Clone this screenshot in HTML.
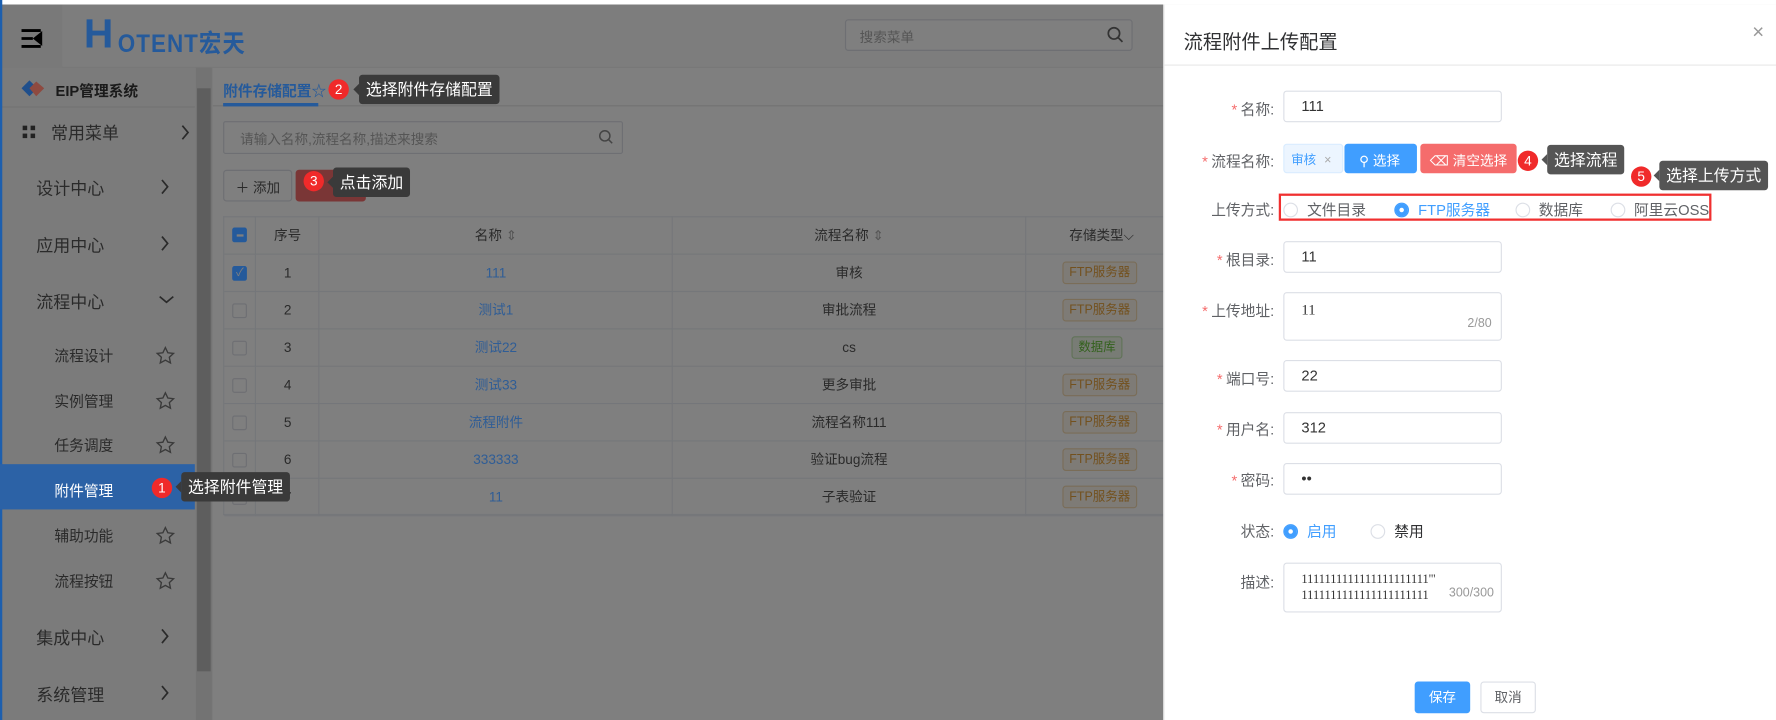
<!DOCTYPE html>
<html><head><meta charset="utf-8"><style>
*{box-sizing:border-box;margin:0;padding:0}
html,body{width:1776px;height:720px;overflow:hidden;background:#7f7f7f}
body{font-family:"Liberation Sans","Noto Sans CJK SC",sans-serif;color:#303133}
#w{position:absolute;left:0;top:0;width:1568px;height:636px;transform:scale(1.13265,1.13208);transform-origin:0 0;overflow:hidden;background:#7f7f7f}
.a{position:absolute;white-space:nowrap}
.side{font-size:15px;color:#2a2a2a}
.tbl td{border-bottom:1px solid #75777a;border-right:1px solid #75777a;text-align:center;font-size:12px;height:33px;white-space:nowrap}
.lnk{color:#2f5d96;font-size:14px}
.tag{display:inline-block;border:1px solid #7a6d58;background:#7e7b76;color:#73511e;font-size:11px;padding:0 5px;line-height:18px;border-radius:3px}
.cb{display:inline-block;width:13px;height:13px;border:1px solid #6e6f73;border-radius:2px;background:#7f7f7f;vertical-align:middle}
.badge{position:absolute;width:18px;height:18px;border-radius:50%;background:#f02a2a;color:#fff;font-size:12px;text-align:center;line-height:18px}
.tip{position:absolute;background:#3a3a3a;color:#fff;font-size:14px;padding:0 6px;line-height:26px;border-radius:3px;white-space:nowrap}
.tip:before{content:"";position:absolute;left:-5px;top:8px;border:5px solid transparent;border-left:0;border-right-color:inherit}
.lab{position:absolute;right:443px;font-size:13px;color:#606266;text-align:right;white-space:nowrap}
.lab i{color:#f56c6c;font-style:normal;margin-right:3px}
.inp{position:absolute;left:1133px;width:193px;height:28px;border:1px solid #dcdfe6;border-radius:3px;font-size:13px;color:#333;padding-left:15px;line-height:26px}
.rd{display:inline-block;width:13px;height:13px;border:1px solid #dcdfe6;border-radius:50%;vertical-align:-2px;margin-right:8px;background:#fff}
.rd.on{border-color:#409eff;background:#409eff;box-shadow:inset 0 0 0 3.5px #409eff,inset 0 0 0 10px #fff}
.sub{font-size:13px;color:#2a2a2a}
</style></head><body><div id="w">
<div class="a" style="left:0;top:0;width:1568px;height:4px;background:#fff"></div>
<div class="a" style="left:0;top:4px;width:1027px;height:56px;background:#7d7d7d;border-bottom:1px solid #777"></div>
<div class="a" style="left:0;top:4px;width:55px;height:56px;background:#797979"></div>
<svg class="a" style="left:17px;top:24px" width="22" height="20"><path d="M2 3h17M2 10h10M2 17h17M19 6l-5 4 5 4z" stroke="#000" stroke-width="2.5" fill="#000"/></svg>
<div class="a" style="left:74px;top:9px;font-size:36px;font-weight:bold;color:#255a9b">H</div>
<div class="a" style="left:104px;top:21px;font-size:22px;color:#255a9b;letter-spacing:1px;font-weight:bold;transform:scaleX(.9);transform-origin:0 0">OTENT宏天</div>
<div class="a" style="left:746px;top:17px;width:254px;height:28px;border:1px solid #6e6f73;border-radius:3px;background:#7f7f7f;font-size:12px;color:#555;padding:6px 12px">搜索菜单</div>
<svg class="a" style="left:977px;top:23px" width="15" height="15"><circle cx="6.5" cy="6.5" r="5" stroke="#333" stroke-width="1.5" fill="none"/><path d="M10 10l4 4" stroke="#333" stroke-width="1.5"/></svg>
<div class="a" style="left:0;top:60px;width:188px;height:576px;background:#7b7b7b"></div>
<div class="a" style="left:173px;top:60px;width:14px;height:576px;background:#737373"></div>
<div class="a" style="left:174px;top:78px;width:12px;height:515px;background:#5e5e5e"></div>
<svg class="a" style="left:18px;top:70px" width="22" height="16"><path d="M1 8l7-7 7 7-7 7z" fill="#1f4f8c"/><path d="M8 8l6-6 7 6-7 7z" fill="#8e4a40"/></svg>
<div class="a" style="left:49px;top:70px;font-size:13px;font-weight:bold;color:#1a1a1a">EIP管理系统</div>
<div class="a" style="left:0;top:94px;width:172px;height:1px;background:#727272"></div>
<div class="a" style="left:20px;top:111px;width:11px;height:11px;background:linear-gradient(#222,#222) 0 0/4px 4px no-repeat,linear-gradient(#222,#222) 7px 0/4px 4px no-repeat,linear-gradient(#222,#222) 0 7px/4px 4px no-repeat,linear-gradient(#222,#222) 7px 7px/4px 4px no-repeat"></div>
<div class="a side" style="left:45px;top:107px">常用菜单</div>
<div class="a side" style="left:32px;top:156px">设计中心</div>
<div class="a side" style="left:32px;top:206px">应用中心</div>
<div class="a side" style="left:32px;top:256px">流程中心</div>
<div class="a side" style="left:32px;top:553px">集成中心</div>
<div class="a side" style="left:32px;top:603px">系统管理</div>
<svg class="a" style="left:0;top:0" width="172" height="636"><g stroke="#2a2a2a" stroke-width="1.5" fill="none"><path d="M161 111l5 6-5 6M143 159l5 6-5 6M143 209l5 6-5 6M141 262l6 5 6-5M143 556l5 6-5 6M143 606l5 6-5 6"/></g>
<g stroke="#3a3a3a" stroke-width="1.2" fill="none"><path id="st" d="M146 307l2.2 4.6 5 .6-3.7 3.4 1 5-4.5-2.5-4.5 2.5 1-5-3.7-3.4 5-.6z"/><use href="#st" y="40"/><use href="#st" y="79"/><use href="#st" y="159"/><use href="#st" y="199"/></g></svg>
<div class="a sub" style="left:48px;top:304px">流程设计</div>
<div class="a sub" style="left:48px;top:344px">实例管理</div>
<div class="a sub" style="left:48px;top:383px">任务调度</div>
<div class="a sub" style="left:48px;top:463px">辅助功能</div>
<div class="a sub" style="left:48px;top:503px">流程按钮</div>
<div class="a" style="left:197px;top:70px;font-size:13px;color:#255a9b;font-weight:bold">附件存储配置☆</div>
<div class="a" style="left:188px;top:93px;width:839px;height:1px;background:#727272"></div>
<div class="a" style="left:197px;top:91px;width:84px;height:3px;background:#255a9b"></div>
<div class="a" style="left:197px;top:107px;width:353px;height:29px;border:1px solid #6e6f73;border-radius:2px;font-size:12px;color:#555;padding:6px 14px">请输入名称,流程名称,描述来搜索</div>
<svg class="a" style="left:528px;top:114px" width="14" height="14"><circle cx="6" cy="6" r="4.5" stroke="#444" stroke-width="1.3" fill="none"/><path d="M9.5 9.5l3 3" stroke="#444" stroke-width="1.3"/></svg>
<div class="a" style="left:197px;top:150px;width:61px;height:28px;border:1px solid #6e6f73;border-radius:3px;font-size:12px;color:#2a2a2a;padding:6px 10px">＋ 添加</div>
<div class="a" style="left:261px;top:150px;width:62px;height:28px;border-radius:3px;background:#7a3636"></div>
<div class="a" style="left:197px;top:191px;width:830px;height:264px;border:1px solid #75777a;border-right:0"></div>
<table class="a tbl" style="left:198px;top:191px;width:900px;border-collapse:collapse;color:#2a2a2a">
<colgroup><col style="width:28px"><col style="width:56px"><col style="width:312px"><col style="width:312px"><col style="width:192px"></colgroup>
<tr><td><span class="cb" style="background:#255a9b;border-color:#255a9b;position:relative"><b style="position:absolute;left:3px;top:5px;width:6px;height:1.5px;background:#7f7f7f"></b></span></td><td>序号</td><td>名称 <span style="color:#555">⇕</span></td><td>流程名称 <span style="color:#555">⇕</span></td><td style="text-align:left;padding-left:38px">存储类型⌵</td></tr>
<tr><td><span class="cb" style="background:#255a9b;border-color:#255a9b;color:#7f7f7f;font-size:10px;line-height:11px">✓</span></td><td>1</td><td class="lnk">111</td><td>审核</td><td style="text-align:left;padding-left:32px"><span class="tag">FTP服务器</span></td></tr>
<tr><td><span class="cb"></span></td><td>2</td><td class="lnk">测试1</td><td>审批流程</td><td style="text-align:left;padding-left:32px"><span class="tag">FTP服务器</span></td></tr>
<tr><td><span class="cb"></span></td><td>3</td><td class="lnk">测试22</td><td>cs</td><td style="text-align:left;padding-left:40px"><span class="tag" style="background:#787c75;border-color:#617358;color:#33611d">数据库</span></td></tr>
<tr><td><span class="cb"></span></td><td>4</td><td class="lnk">测试33</td><td>更多审批</td><td style="text-align:left;padding-left:32px"><span class="tag">FTP服务器</span></td></tr>
<tr><td><span class="cb"></span></td><td>5</td><td class="lnk">流程附件</td><td>流程名称111</td><td style="text-align:left;padding-left:32px"><span class="tag">FTP服务器</span></td></tr>
<tr><td><span class="cb"></span></td><td>6</td><td class="lnk">333333</td><td>验证bug流程</td><td style="text-align:left;padding-left:32px"><span class="tag">FTP服务器</span></td></tr>
<tr><td><span class="cb"></span></td><td>7</td><td class="lnk">11</td><td>子表验证</td><td style="text-align:left;padding-left:32px"><span class="tag">FTP服务器</span></td></tr>
</table>
<div class="a" style="left:0;top:0;width:2px;height:636px;background:#1d5fae"></div>
<div class="a" style="left:0;top:410px;width:172px;height:40px;background:#2c62a6"></div>
<div class="a" style="left:48px;top:423px;font-size:13px;color:#fff">附件管理</div>
<div class="badge" style="left:134px;top:422px">1</div>
<div class="tip" style="left:160px;top:417px;border-color:#3a3a3a">选择附件管理</div>
<div class="badge" style="left:290px;top:70px">2</div>
<div class="tip" style="left:317px;top:66px;border-color:#3a3a3a">选择附件存储配置</div>
<div class="badge" style="left:268px;top:151px">3</div>
<div class="tip" style="left:294px;top:148px;border-color:#3a3a3a">点击添加</div>
<div class="a" style="left:1027px;top:4px;width:541px;height:632px;background:#fff;border-left:1px solid #ddd"></div>
<div class="a" style="left:1045px;top:23px;font-size:17px;color:#303133">流程附件上传配置</div>
<div class="a" style="left:1547px;top:18px;font-size:18px;color:#999">×</div>
<div class="a" style="left:1028px;top:57px;width:540px;height:1px;background:#e8e8e8"></div>
<div class="lab" style="top:86px"><i>*</i>名称:</div>
<div class="inp" style="top:80px">111</div>
<div class="lab" style="top:132px"><i>*</i>流程名称:</div>
<div class="a" style="left:1133px;top:127px;width:53px;height:26px;background:#ecf5ff;border:1px solid #d9ecff;border-radius:3px;font-size:11px;color:#409eff;padding:5px 6px">审核 <span style="color:#aaa;margin-left:4px">×</span></div>
<div class="a" style="left:1187px;top:127px;width:64px;height:26px;background:#409eff;border-radius:3px;font-size:12px;color:#fff;padding:6px 13px">⚲ 选择</div>
<div class="a" style="left:1254px;top:127px;width:85px;height:26px;background:#f56c6c;border-radius:3px;font-size:12px;color:#fff;padding:6px 0;text-align:center">⌫ 清空选择</div>
<div class="lab" style="top:175px">上传方式:</div>
<div class="a" style="left:1129px;top:171px;width:382px;height:24px;border:2px solid #f03030"></div>
<div class="a" style="left:1133px;top:175px;font-size:13px;color:#606266"><span class="rd"></span>文件目录<span style="display:inline-block;width:25px"></span><span class="rd on"></span><span style="color:#409eff">FTP服务器</span><span style="display:inline-block;width:22px"></span><span class="rd"></span>数据库<span style="display:inline-block;width:24px"></span><span class="rd"></span>阿里云OSS</div>
<div class="lab" style="top:219px"><i>*</i>根目录:</div>
<div class="inp" style="top:213px">11</div>
<div class="lab" style="top:264px"><i>*</i>上传地址:</div>
<div class="inp" style="top:258px;height:43px;line-height:1;padding-top:8px;font-family:'Liberation Serif',serif">11<span style="position:absolute;right:8px;bottom:8px;font-size:11px;color:#999;font-family:'Liberation Sans',sans-serif">2/80</span></div>
<div class="lab" style="top:324px"><i>*</i>端口号:</div>
<div class="inp" style="top:318px">22</div>
<div class="lab" style="top:369px"><i>*</i>用户名:</div>
<div class="inp" style="top:364px">312</div>
<div class="lab" style="top:414px"><i>*</i>密码:</div>
<div class="inp" style="top:409px">••</div>
<div class="lab" style="top:459px">状态:</div>
<div class="a" style="left:1133px;top:459px;font-size:13px"><span class="rd on"></span><span style="color:#409eff">启用</span><span style="display:inline-block;width:30px"></span><span class="rd"></span>禁用</div>
<div class="lab" style="top:504px">描述:</div>
<div class="inp" style="top:497px;height:44px;font-family:'Liberation Serif',serif;font-size:11px;line-height:14px;padding:7px 0 0 15px;overflow:hidden">1111111111111111111111'''<br>1111111111111111111111<span style="position:absolute;right:6px;bottom:9px;font-family:'Liberation Sans',sans-serif;color:#999">300/300</span></div>
<div class="a" style="left:1249px;top:602px;width:49px;height:28px;background:#409eff;border-radius:3px;color:#fff;font-size:12px;text-align:center;line-height:28px">保存</div>
<div class="a" style="left:1307px;top:602px;width:49px;height:28px;border:1px solid #dcdfe6;border-radius:3px;color:#606266;font-size:12px;text-align:center;line-height:26px">取消</div>
<div class="badge" style="left:1340px;top:133px">4</div>
<div class="tip" style="left:1366px;top:128px;background:#555;border-color:#555">选择流程</div>
<div class="badge" style="left:1440px;top:147px">5</div>
<div class="tip" style="left:1465px;top:142px;background:#555;border-color:#555">选择上传方式</div>
</div></body></html>
